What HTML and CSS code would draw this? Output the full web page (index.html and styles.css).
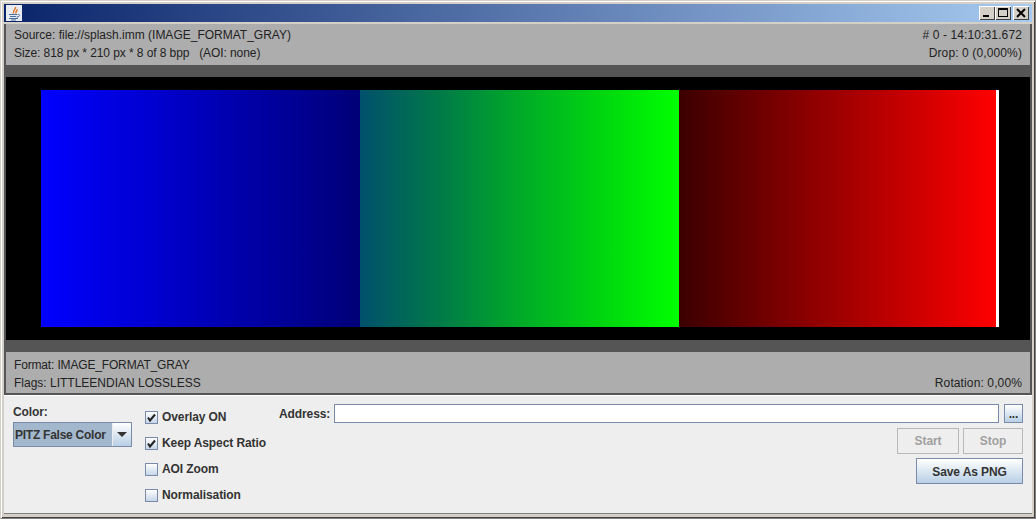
FILE: index.html
```html
<!DOCTYPE html>
<html lang="en">
<head>
  <meta charset="UTF-8">
  <title>Image Viewer</title>
  <link rel="stylesheet" href="styles.css">
</head>
<body>
  <div class="window">
    <div class="titlebar">
      <span class="app-icon">
        <svg width="16" height="16" viewBox="0 0 16 16">
          <path d="M9.500 2 C10.500 4 6.500 5 7.500 8.500 M11.500 4.500 C10.500 6 9.500 6.500 10 8.500" fill="none" stroke="#e2711d" stroke-width="1.400"/>
          <path d="M3 9.500 H11 M4 11.500 H10 M3 13.500 H12 M5 15 H10 M11.500 9.500 C14.500 9 14.500 12 10.500 12" fill="none" stroke="#4a6f9c" stroke-width="1"/>
        </svg>
      </span>
      <div class="win-buttons">
        <span class="win-btn">
          <svg width="12" height="12" viewBox="0 0 12 12"><rect x="2" y="8" width="6" height="2" fill="#000"/></svg>
        </span>
        <span class="win-btn">
          <svg width="12" height="12" viewBox="0 0 12 12"><rect x="1.500" y="1.500" width="9" height="8" fill="none" stroke="#000"/><rect x="1" y="1" width="10" height="2" fill="#000"/></svg>
        </span>
        <span class="win-btn close">
          <svg width="12" height="12" viewBox="0 0 12 12"><path d="M2 2 L10 10 M10 2 L2 10" stroke="#000" stroke-width="2"/></svg>
        </span>
      </div>
    </div>

    <div class="viewer">
      <div class="info top">
        <div class="info-row"><span>Source: file://splash.imm (IMAGE_FORMAT_GRAY)</span><span class="wider"># 0 - 14:10:31.672</span></div>
        <div class="info-row"><span class="narrow">Size: 818 px * 210 px * 8 of 8 bpp &nbsp;&nbsp;(AOI: none)</span><span class="wider">Drop: 0 (0,000%)</span></div>
      </div>
      <div class="band"></div>
      <div class="canvas">
        <div class="picture">
          <div class="ramp blue"></div>
          <div class="ramp green"></div>
          <div class="ramp red"></div>
          <div class="ramp end"></div>
        </div>
      </div>
      <div class="band"></div>
      <div class="info bottom">
        <div class="info-row"><span class="narrower">Format: IMAGE_FORMAT_GRAY</span></div>
        <div class="info-row"><span>Flags: LITTLEENDIAN LOSSLESS</span><span class="wider">Rotation: 0,00%</span></div>
      </div>
    </div>

    <div class="controls">
      <div class="color-col">
        <label class="color-label">Color:</label>
        <div class="combo">
          <span class="combo-value">PITZ False Color</span>
          <span class="combo-arrow"></span>
        </div>
      </div>

      <div class="check-col">
        <label class="check"><span class="box on"><svg width="11" height="11" viewBox="0 0 11 11"><path d="M2 5.500 L4 8.500 L9 2.500" fill="none" stroke="#222" stroke-width="2"/></svg></span>Overlay ON</label>
        <label class="check"><span class="box on"><svg width="11" height="11" viewBox="0 0 11 11"><path d="M2 5.500 L4 8.500 L9 2.500" fill="none" stroke="#222" stroke-width="2"/></svg></span>Keep Aspect Ratio</label>
        <label class="check"><span class="box"></span>AOI Zoom</label>
        <label class="check"><span class="box"></span>Normalisation</label>
      </div>

      <div class="right-col">
        <div class="address-row">
          <label class="address-label">Address:</label>
          <input class="address" type="text">
          <button class="btn dots">...</button>
        </div>
        <div class="btn-row">
          <button class="btn start off">Start</button>
          <button class="btn stop off">Stop</button>
        </div>
        <div class="btn-row">
          <button class="btn save">Save As PNG</button>
        </div>
      </div>
    </div>
  </div>
</body>
</html>
```

FILE: styles.css
```css
html, body {
  margin: 0;
  padding: 0;
  background: #d4d0c8;
}
body {
  font-family: "Liberation Sans", Arial, sans-serif;
  font-size: 12px;
  color: #333;
}
.window {
  width: 1036px;
  height: 519px;
  box-sizing: border-box;
  border: 1px solid #808080;
  border-top-color: #d4d0c8;
  border-left-color: #d4d0c8;
  padding: 3px 3px 4px 3px;
  display: flex;
  flex-direction: column;
  box-shadow: inset 1px 1px 0 #fff, inset -1px -1px 0 #404040;
}

/* Title bar */
.titlebar {
  height: 18px;
  flex: none;
  display: flex;
  justify-content: space-between;
  align-items: center;
  padding: 0 3px 0 2px;
  background: linear-gradient(to right, #0a246a, #a6caf0);
}
.app-icon {
  width: 16px;
  height: 16px;
  background: #e8ecf2;
  display: block;
}
.win-buttons {
  display: flex;
}
.win-btn {
  width: 16px;
  height: 14px;
  background: #d4d0c8;
  box-shadow: inset 1px 1px 0 #fff, inset -1px -1px 0 #404040;
  display: flex;
  align-items: center;
  justify-content: center;
}
.win-btn.close {
  margin-left: 2px;
}

/* Image area */
.viewer {
  margin-top: 2px;
  border: solid #555;
  border-width: 0 2px 2px 2px;
  flex: none;
  display: flex;
  flex-direction: column;
}
.info {
  height: 41px;
  background: #adadad;
  color: #222;
  box-sizing: border-box;
  padding: 2px 8px 0 8px;
  font-size: 12px;
}
.info.bottom {
  padding-top: 4px;
}
.info-row {
  display: flex;
  justify-content: space-between;
  height: 18px;
  line-height: 18px;
}
.narrow {
  letter-spacing: -0.08px;
}
.narrower {
  letter-spacing: -0.16px;
}
.wider {
  letter-spacing: 0.12px;
}
.band {
  height: 12px;
  background: #555;
}
.canvas {
  height: 263px;
  background: #000;
  padding: 13px 0 0 35px;
  box-sizing: border-box;
}
.picture {
  display: flex;
  height: 237px;
}
.ramp {
  width: 319px;
}
.ramp.blue {
  background: linear-gradient(to right, #0000ff 0%, #000078 100%);
}
.ramp.green {
  background: linear-gradient(to right, #00506c 0%, #007a48 25%, #00aa28 50%, #00d510 75%, #00ff00 100%);
}
.ramp.red {
  width: 317px;
  background: linear-gradient(to right, #3c0000 0%, #ff0000 100%);
}
.ramp.end {
  width: 3px;
  background: #fff;
}

/* Bottom controls */
.controls {
  flex: 1;
  background: #eeeeee;
  border-top: 1px solid #fff;
  border-bottom: 1px solid #808080;
  display: flex;
  font-weight: bold;
  letter-spacing: -0.1px;
  padding: 8px 9px 0 9px;
}
.color-col {
  width: 132px;
  flex: none;
}
.color-label {
  display: block;
  line-height: 16px;
  margin-bottom: 2px;
}
.combo {
  display: flex;
  height: 25px;
  width: 119px;
  border: 1px solid #7a8aa9;
  box-sizing: border-box;
}
.combo-value {
  flex: 1;
  background: #a3b8cc;
  line-height: 25px;
  padding-left: 1px;
  border-right: 1px solid #eee;
  letter-spacing: -0.25px;
}
.combo-arrow {
  width: 18px;
  position: relative;
  background: linear-gradient(#fff, #b8cfe5);
}
.combo-arrow::after {
  content: "";
  position: absolute;
  left: 4px;
  top: 9px;
  border: 5px solid transparent;
  border-top: 5px solid #333;
  border-bottom: 0;
}
.check-col {
  width: 134px;
  flex: none;
}
.check {
  display: flex;
  align-items: center;
  gap: 4px;
  height: 26px;
}
.box {
  width: 13px;
  height: 13px;
  border: 1px solid #7a8aa9;
  background: linear-gradient(#fff, #c5d5e8);
  box-sizing: border-box;
  display: flex;
}
.right-col {
  flex: 1;
  display: flex;
  flex-direction: column;
}
.address-row {
  display: flex;
  align-items: center;
  height: 19px;
  margin-bottom: 5px;
}
.address-label {
  width: 55px;
  flex: none;
}
.address {
  flex: 1;
  height: 19px;
  box-sizing: border-box;
  border: 1px solid #7a8aa9;
  background: #fff;
  margin: 0 5px 0 0;
  padding: 0;
}
.btn {
  font-family: inherit;
  font-size: 12px;
  font-weight: bold;
  letter-spacing: -0.1px;
  color: #333;
  border: 1px solid #7a8aa9;
  background: linear-gradient(#fff, #b8cfe5);
  padding: 0;
}
.dots {
  width: 19px;
  height: 19px;
}
.btn-row {
  display: flex;
  justify-content: flex-end;
  gap: 4px;
  margin-bottom: 4px;
}
.start {
  width: 62px;
  height: 26px;
}
.stop {
  width: 60px;
  height: 26px;
}
.off {
  background: #eeeeee;
  border-color: #b8b8b8;
  color: #a0a0a0;
}
.save {
  width: 107px;
  height: 26px;
  padding-top: 2px;
}
```
